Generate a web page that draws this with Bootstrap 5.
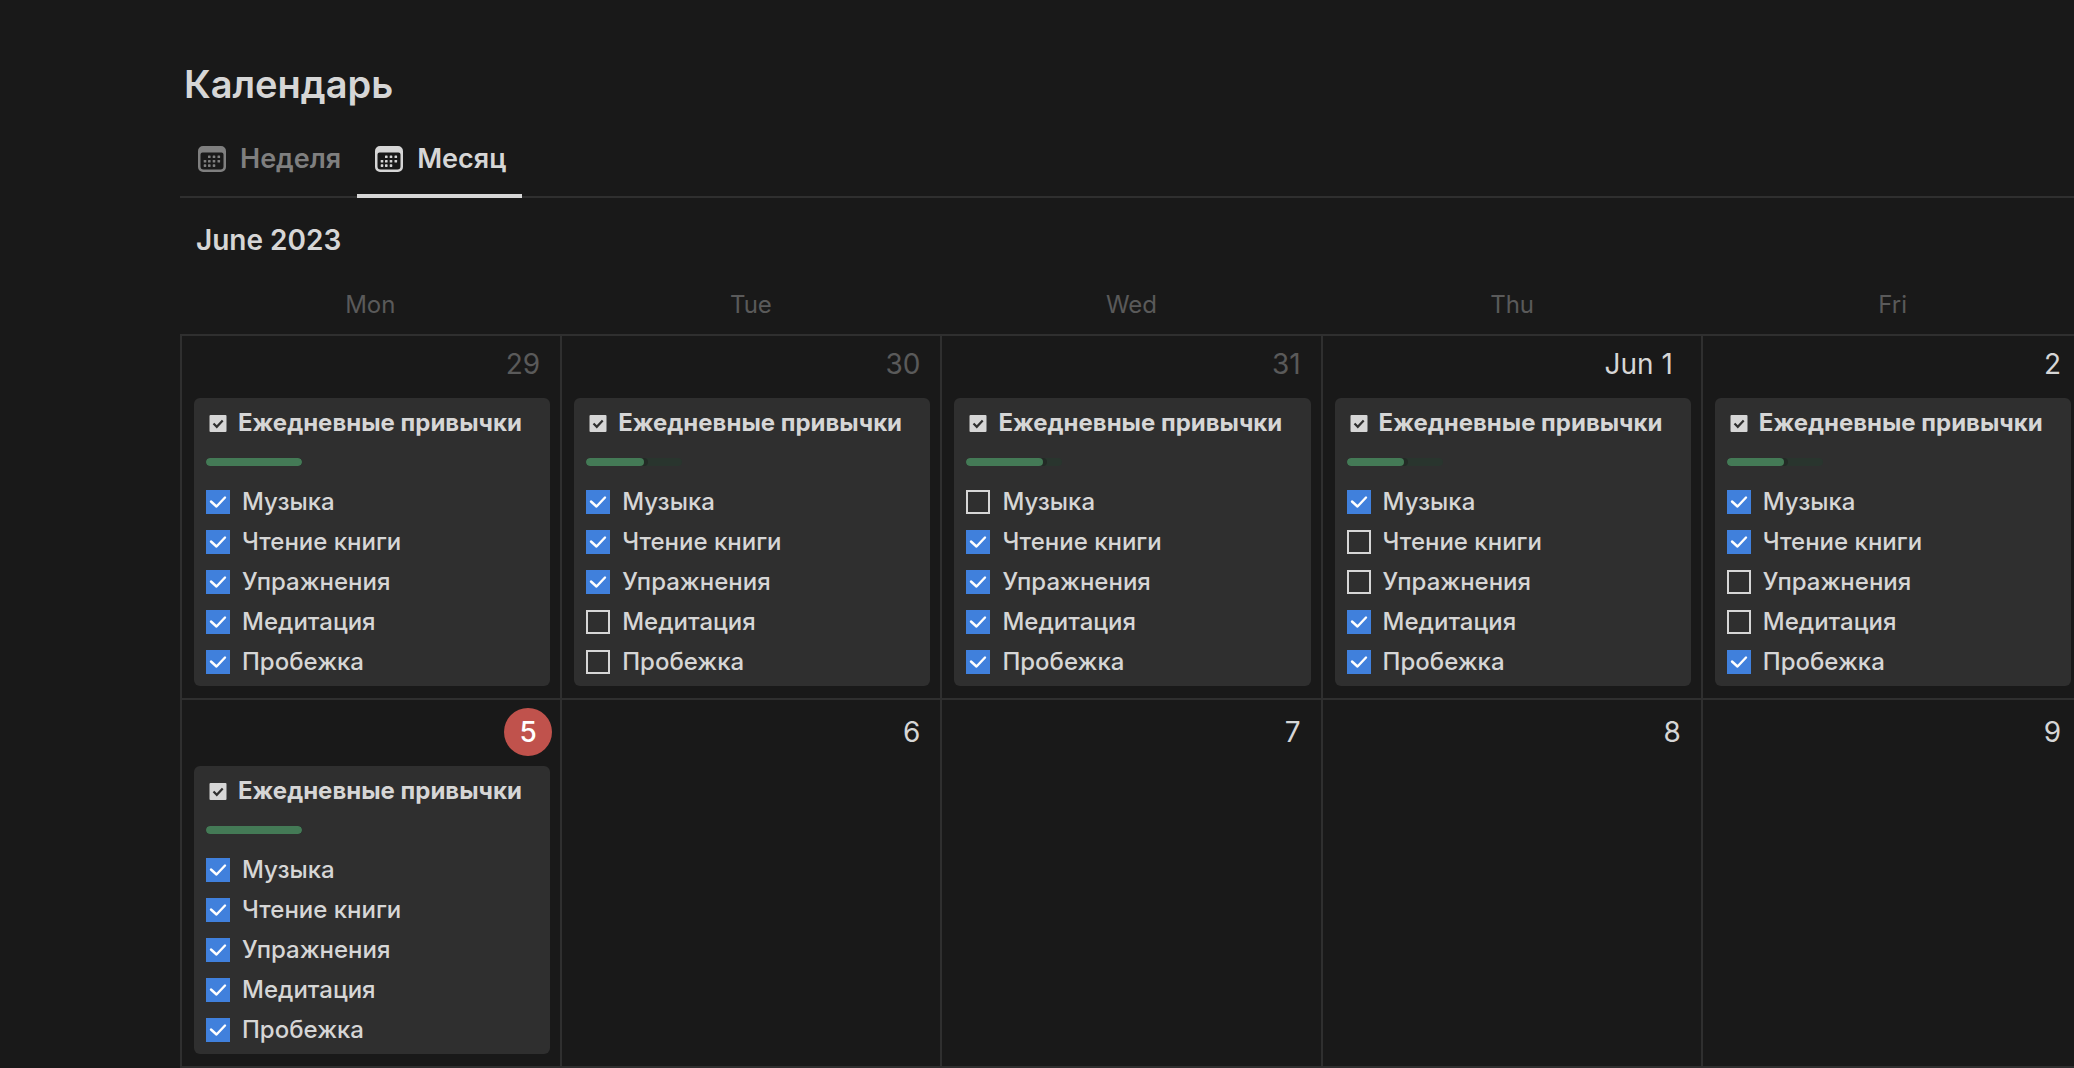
<!DOCTYPE html>
<html lang="ru" data-bs-theme="dark">
<head>
<meta charset="utf-8">
<meta name="viewport" content="width=device-width, initial-scale=1">
<title>Календарь</title>
<link href="https://cdn.jsdelivr.net/npm/bootstrap@5.3.0/dist/css/bootstrap.min.css" rel="stylesheet">
<style>
  :root { --line: #2f2f2f; --ink: #d6d6d6; --dim: #5a5a5a; }
  body { background: #191919; color: var(--ink); font-family: Inter, "Noto Sans", sans-serif; font-size: 24px; line-height: 40px; overflow: hidden; }
  h1, h2, h3 { color: var(--ink); }
  .page { padding: 60px 0 0 180px; overflow: hidden; }
  .page-title { font-size: 38px; line-height: 48px; font-weight: 600; padding-left: 4px; margin: 0 0 10px; }
  .view-tabs { border-bottom: 2px solid var(--line); font-size: 27px; font-weight: 600; }
  .view-tabs .nav-link { height: 80px; margin-bottom: -2px; padding: 6px 16px 0; gap: 12px; color: #7f7f7f; border-bottom: 4px solid transparent; border-radius: 0; }
  .view-tabs .nav-link.active { color: var(--ink); border-color: var(--ink); }
  .tab-icon { width: 32px; height: 32px; }
  .month-name { font-size: 28px; font-weight: 600; line-height: 84px; padding-left: 16px; margin: 0; }
  /* the last column runs a little past the window edge */
  .calendar { margin-right: -9px; }
  .week, .weekdays { display: grid; grid-template-columns: repeat(5, minmax(0, 1fr)); }
  .week { border-left: 2px solid var(--line); }
  .weekdays { color: var(--dim); text-align: center; line-height: 46px; margin-bottom: 6px; }
  .weeks { border-top: 2px solid var(--line); }
  .day { border-right: 2px solid var(--line); border-bottom: 2px solid var(--line); padding: 8px 10px 12px 12px; }
  .date { font-size: 28px; line-height: 40px; text-align: right; padding-right: 10px; margin-bottom: 14px; }
  .date.outside { color: var(--dim); }
  .date.month-start { padding-right: 18px; }
  .week-now .date { line-height: 48px; margin-bottom: 10px; }
  .date.today { display: flex; justify-content: flex-end; padding-right: 0; margin-right: -2px; }
  .today time { width: 48px; height: 48px; border-radius: 50%; background: #c0524c; color: #fff; text-align: center; font-weight: 500; }
  .habit-card { background: #2f2f2f; border-radius: 6px; padding: 12px; }
  .habit-title { font-size: 24px; line-height: 26px; font-weight: 700; gap: 8px; margin: 0 0 22px; white-space: nowrap; }
  .title-icon { width: 24px; height: 24px; flex: none; }
  .habit-bar { width: 96px; height: 8px; border-radius: 4px; background: #29352e; margin-bottom: 24px; }
  .habit-bar .progress-bar { background: #447a56; border-radius: 4px; box-shadow: 4px 0 0 #232a26; }
  .habit-list { display: grid; gap: 16px; }
  .habit { display: flex; align-items: center; gap: 12px; line-height: 24px; font-weight: 500; }
  .habit .form-check-input { width: 24px; height: 24px; margin: 0; border: 2px solid var(--ink); border-radius: 0; background-color: transparent; flex: none; }
  .habit .form-check-input:checked { border: 0; background-color: #4080dc; background-size: 24px 24px; background-image: url("data:image/svg+xml,%3Csvg xmlns='http://www.w3.org/2000/svg' viewBox='0 0 24 24'%3E%3Cpath d='M5 11.5l5.500 5L19 7.500' fill='none' stroke='%23fff' stroke-width='2.4' stroke-linecap='round' stroke-linejoin='round'/%3E%3C/svg%3E"); }
</style>
<script src="https://cdn.jsdelivr.net/npm/bootstrap@5.3.0/dist/js/bootstrap.bundle.min.js"></script>
</head>
<body>
<svg class="d-none" aria-hidden="true">
  <symbol id="i-cal" viewBox="0 0 32 32">
    <path fill="currentColor" fill-rule="evenodd" d="M7 3h18a5 5 0 0 1 5 5v16a5 5 0 0 1-5 5H7a5 5 0 0 1-5-5V8a5 5 0 0 1 5-5zM4.500 11.500v12a3 3 0 0 0 3 3h17a3 3 0 0 0 3-3v-12a2 2 0 0 0-2-2h-19a2 2 0 0 0-2 2z"/>
    <g fill="currentColor"><rect x="12" y="12.500" width="2.600" height="2.600" rx=".6"/><rect x="16.700" y="12.500" width="2.600" height="2.600" rx=".6"/><rect x="21.500" y="12.500" width="2.600" height="2.600" rx=".6"/><rect x="7.700" y="17" width="2.600" height="2.600" rx=".6"/><rect x="12" y="17" width="2.600" height="2.600" rx=".6"/><rect x="16.700" y="17" width="2.600" height="2.600" rx=".6"/><rect x="21.500" y="17" width="2.600" height="2.600" rx=".6"/><rect x="7.700" y="21.300" width="2.600" height="2.600" rx=".6"/><rect x="12" y="21.300" width="2.600" height="2.600" rx=".6"/><rect x="16.700" y="21.300" width="2.600" height="2.600" rx=".6"/></g>
  </symbol>
  <symbol id="i-check" viewBox="0 0 24 24">
    <rect x="3.500" y="4" width="17" height="17" rx="1" fill="#d6d6d6"/>
    <path d="M7.500 12.500l3.300 3.300L16.700 9.500" fill="none" stroke="#2f2f2f" stroke-width="2.200"/>
  </symbol>
</svg>
<main class="page">
  <h1 class="page-title">Календарь</h1>
  <nav class="nav view-tabs" aria-label="Вид календаря">
    <a class="nav-link d-flex align-items-center" href="#"><svg class="tab-icon"><use href="#i-cal"/></svg>Неделя</a>
    <a class="nav-link d-flex align-items-center active" aria-current="page" href="#"><svg class="tab-icon"><use href="#i-cal"/></svg>Месяц</a>
  </nav>
  <h2 class="month-name">June 2023</h2>
  <section class="calendar">
    <div class="weekdays"><div>Mon</div><div>Tue</div><div>Wed</div><div>Thu</div><div>Fri</div></div>
    <div class="weeks">
      <div class="week">
        <div class="day">
          <div class="date outside"><time>29</time></div>
          <article class="habit-card">
            <h3 class="habit-title d-flex align-items-center"><svg class="title-icon"><use href="#i-check"/></svg>Ежедневные привычки</h3>
            <div class="progress habit-bar"><div class="progress-bar" style="width:100%"></div></div>
            <div class="habit-list">
              <label class="habit"><input class="form-check-input" type="checkbox" checked>Музыка</label>
              <label class="habit"><input class="form-check-input" type="checkbox" checked>Чтение книги</label>
              <label class="habit"><input class="form-check-input" type="checkbox" checked>Упражнения</label>
              <label class="habit"><input class="form-check-input" type="checkbox" checked>Медитация</label>
              <label class="habit"><input class="form-check-input" type="checkbox" checked>Пробежка</label>
            </div>
          </article>
        </div>
        <div class="day">
          <div class="date outside"><time>30</time></div>
          <article class="habit-card">
            <h3 class="habit-title d-flex align-items-center"><svg class="title-icon"><use href="#i-check"/></svg>Ежедневные привычки</h3>
            <div class="progress habit-bar"><div class="progress-bar" style="width:60%"></div></div>
            <div class="habit-list">
              <label class="habit"><input class="form-check-input" type="checkbox" checked>Музыка</label>
              <label class="habit"><input class="form-check-input" type="checkbox" checked>Чтение книги</label>
              <label class="habit"><input class="form-check-input" type="checkbox" checked>Упражнения</label>
              <label class="habit"><input class="form-check-input" type="checkbox">Медитация</label>
              <label class="habit"><input class="form-check-input" type="checkbox">Пробежка</label>
            </div>
          </article>
        </div>
        <div class="day">
          <div class="date outside"><time>31</time></div>
          <article class="habit-card">
            <h3 class="habit-title d-flex align-items-center"><svg class="title-icon"><use href="#i-check"/></svg>Ежедневные привычки</h3>
            <div class="progress habit-bar"><div class="progress-bar" style="width:80%"></div></div>
            <div class="habit-list">
              <label class="habit"><input class="form-check-input" type="checkbox">Музыка</label>
              <label class="habit"><input class="form-check-input" type="checkbox" checked>Чтение книги</label>
              <label class="habit"><input class="form-check-input" type="checkbox" checked>Упражнения</label>
              <label class="habit"><input class="form-check-input" type="checkbox" checked>Медитация</label>
              <label class="habit"><input class="form-check-input" type="checkbox" checked>Пробежка</label>
            </div>
          </article>
        </div>
        <div class="day">
          <div class="date month-start"><time>Jun 1</time></div>
          <article class="habit-card">
            <h3 class="habit-title d-flex align-items-center"><svg class="title-icon"><use href="#i-check"/></svg>Ежедневные привычки</h3>
            <div class="progress habit-bar"><div class="progress-bar" style="width:60%"></div></div>
            <div class="habit-list">
              <label class="habit"><input class="form-check-input" type="checkbox" checked>Музыка</label>
              <label class="habit"><input class="form-check-input" type="checkbox">Чтение книги</label>
              <label class="habit"><input class="form-check-input" type="checkbox">Упражнения</label>
              <label class="habit"><input class="form-check-input" type="checkbox" checked>Медитация</label>
              <label class="habit"><input class="form-check-input" type="checkbox" checked>Пробежка</label>
            </div>
          </article>
        </div>
        <div class="day">
          <div class="date"><time>2</time></div>
          <article class="habit-card">
            <h3 class="habit-title d-flex align-items-center"><svg class="title-icon"><use href="#i-check"/></svg>Ежедневные привычки</h3>
            <div class="progress habit-bar"><div class="progress-bar" style="width:60%"></div></div>
            <div class="habit-list">
              <label class="habit"><input class="form-check-input" type="checkbox" checked>Музыка</label>
              <label class="habit"><input class="form-check-input" type="checkbox" checked>Чтение книги</label>
              <label class="habit"><input class="form-check-input" type="checkbox">Упражнения</label>
              <label class="habit"><input class="form-check-input" type="checkbox">Медитация</label>
              <label class="habit"><input class="form-check-input" type="checkbox" checked>Пробежка</label>
            </div>
          </article>
        </div>
      </div>
      <div class="week week-now">
        <div class="day">
          <div class="date today"><time>5</time></div>
          <article class="habit-card">
            <h3 class="habit-title d-flex align-items-center"><svg class="title-icon"><use href="#i-check"/></svg>Ежедневные привычки</h3>
            <div class="progress habit-bar"><div class="progress-bar" style="width:100%"></div></div>
            <div class="habit-list">
              <label class="habit"><input class="form-check-input" type="checkbox" checked>Музыка</label>
              <label class="habit"><input class="form-check-input" type="checkbox" checked>Чтение книги</label>
              <label class="habit"><input class="form-check-input" type="checkbox" checked>Упражнения</label>
              <label class="habit"><input class="form-check-input" type="checkbox" checked>Медитация</label>
              <label class="habit"><input class="form-check-input" type="checkbox" checked>Пробежка</label>
            </div>
          </article>
        </div>
        <div class="day"><div class="date"><time>6</time></div></div>
        <div class="day"><div class="date"><time>7</time></div></div>
        <div class="day"><div class="date"><time>8</time></div></div>
        <div class="day"><div class="date"><time>9</time></div></div>
      </div>
    </div>
  </section>
</main>
</body>
</html>
